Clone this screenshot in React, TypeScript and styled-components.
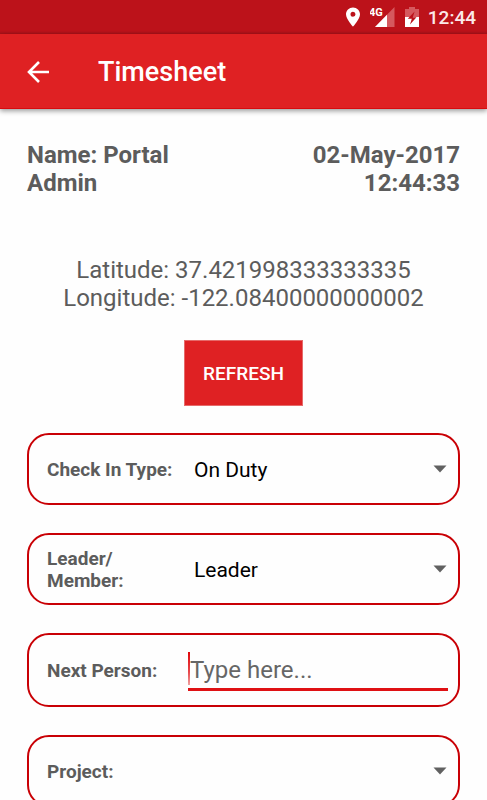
import React from "react";
import styled, { createGlobalStyle } from "styled-components";

const GlobalStyle = createGlobalStyle`
  * { box-sizing: border-box; }
  html { scrollbar-width: none; }
  body {
    margin: 0;
    background: #fefefe;
    color: #5c5c5c;
    font-family: Roboto, "Liberation Sans", sans-serif;
  }
`;

const StatusBar = styled.div`
  display: flex;
  align-items: center;
  justify-content: flex-end;
  height: 34px;
  padding: 0 11px;
  background: linear-gradient(#bc121a 31px, #a61118 34px);
  color: #fff;
`;

const StatusIcon = styled.svg<{ $gap: number }>`
  display: block;
  flex: none;
  margin-right: ${(p) => p.$gap}px;
`;

const Clock = styled.time`
  padding-top: 2px;
  font-size: 19px;
  line-height: 32px;
  font-weight: 500;
  color: #fbe9e9;
`;

const AppBar = styled.header`
  display: flex;
  align-items: center;
  gap: 48px;
  height: 75px;
  padding: 2px 26px 0;
  background: #df2123;
  border-bottom: 1px solid #d80b0e;
  box-shadow: 0 2px 5px rgba(0, 0, 0, 0.4);
  color: #fff;
`;

const BackButton = styled.button`
  display: flex;
  padding: 0;
  border: 0;
  background: none;
  color: inherit;
  cursor: pointer;
`;

const Title = styled.h1`
  margin: 0;
  font-size: 27px;
  line-height: 32px;
  font-weight: 500;
`;

const Content = styled.main`
  display: flex;
  flex-direction: column;
  padding: 32px 27px 28px;
`;

const Summary = styled.section`
  display: flex;
  justify-content: space-between;
  font-size: 24px;
  line-height: 28px;
  font-weight: 700;
`;

const SummaryText = styled.p<{ $end?: boolean }>`
  flex: 0 1 50%;
  max-width: 160px;
  margin: 0;
  text-align: ${(p) => (p.$end ? "right" : "left")};
`;

const Coordinates = styled.p`
  margin: 59px 0 28px;
  font-size: 24px;
  line-height: 28px;
  text-align: center;
`;

const RefreshButton = styled.button`
  align-self: center;
  padding: 23px 18px 21px;
  border: 1px solid #e66a6a;
  background: #df2123;
  color: #fff;
  font: 500 19px/20px Roboto, "Liberation Sans", sans-serif;
  text-transform: uppercase;
  cursor: pointer;
`;

const Form = styled.form`
  display: flex;
  flex-direction: column;
  gap: 28px;
  margin-top: 27px;
`;

const Field = styled.div`
  display: grid;
  grid-template-columns: 141px minmax(0, 1fr);
  align-items: center;
  min-height: 72px;
  padding: 0 10px 0 18px;
  border: 2px solid #c90005;
  border-radius: 22px;
`;

const TextField = styled(Field)`
  min-height: 74px;
`;

const Label = styled.label`
  padding-top: 2px;
  font-size: 19px;
  line-height: 22px;
  font-weight: 700;
`;

const SelectBox = styled.div`
  display: grid;
  align-items: center;

  > * { grid-area: 1 / 1; }
  > svg {
    justify-self: end;
    margin-right: 1px;
    pointer-events: none;
  }
`;

const Select = styled.select`
  width: 100%;
  height: 48px;
  padding: 2px 24px 0 6px;
  border: 0;
  outline: 0;
  appearance: none;
  background: none;
  color: #000;
  font: 400 21px/28px Roboto, "Liberation Sans", sans-serif;
`;

const Input = styled.input`
  width: 100%;
  height: 42px;
  padding: 2px 0 0 2px;
  border: 0;
  border-bottom: 3px solid #df1114;
  border-radius: 0;
  outline: 0;
  background: linear-gradient(#e0070b, #e8474a 60%, #f0a0a0) 0 3px / 2px 33px no-repeat;
  color: #000;
  font: 400 24px/28px Roboto, "Liberation Sans", sans-serif;

  &::placeholder { color: #666; opacity: 1; }
`;

const Arrow = () => (
  <svg width="14" height="8" viewBox="0 0 14 8" aria-hidden="true">
    <path d="M0.5 0.5h13L7 7.5z" fill="#616161" />
  </svg>
);

function SelectField({ id, label, options }: { id: string; label: React.ReactNode; options: string[] }) {
  return (
    <Field>
      <Label htmlFor={id}>{label}</Label>
      <SelectBox>
        <Select id={id}>
          {options.map((option) => (
            <option key={option}>{option}</option>
          ))}
        </Select>
        <Arrow />
      </SelectBox>
    </Field>
  );
}

export default function App() {
  return (
    <>
      <GlobalStyle />
      <StatusBar>
        <StatusIcon $gap={10} width="14" height="20" viewBox="0 0 14 20" aria-hidden="true">
          <path
            d="M7 0.5C3.1 0.5 0 3.5 0 7.3c0 5 7 12.4 7 12.4s7-7.4 7-12.4C14 3.5 10.9 0.5 7 0.5zm0 9.2a2.5 2.5 0 1 1 0-5 2.5 2.5 0 0 1 0 5z"
            fill="#fff"
          />
        </StatusIcon>
        <StatusIcon $gap={10} width="25" height="20" viewBox="0 0 25 20" aria-hidden="true">
          <path d="M24.5 0v20H5z" fill="#d5595e" />
          <path d="M17 7.7V20H5z" fill="#fff" />
          <text
            x="-1"
            y="9"
            fill="#fff"
            fontFamily="Liberation Sans Narrow, Roboto, sans-serif"
            fontSize="11"
            fontWeight="700"
          >
            4G
          </text>
        </StatusIcon>
        <StatusIcon $gap={9} width="14" height="20" viewBox="0 0 14 20" aria-hidden="true">
          <path d="M4 0h6v2h4v8H0V2h4z" fill="#d5595e" />
          <path d="M0 10h14v10H0z" fill="#fff" />
          <path d="M9.6 4.5L2.8 11.8h4L5 17.4l6.5-7.2H7.8z" fill="#bc121a" />
        </StatusIcon>
        <Clock>12:44</Clock>
      </StatusBar>
      <AppBar>
        <BackButton type="button" aria-label="Back">
          <svg width="24" height="24" viewBox="0 0 24 24" fill="none" stroke="currentColor" strokeWidth="2.6" aria-hidden="true">
            <path d="M23 12H3M13 2L3 12l10 10" />
          </svg>
        </BackButton>
        <Title>Timesheet</Title>
      </AppBar>
      <Content>
        <Summary>
          <SummaryText>Name: Portal Admin</SummaryText>
          <SummaryText $end>
            02-May-2017
            <br />
            12:44:33
          </SummaryText>
        </Summary>
        <Coordinates>
          Latitude: 37.421998333333335
          <br />
          Longitude: -122.08400000000002
        </Coordinates>
        <RefreshButton type="button">Refresh</RefreshButton>
        <Form>
          <SelectField id="check-in" label="Check In Type:" options={["On Duty", "Off Duty"]} />
          <SelectField
            id="role"
            label={
              <>
                Leader/
                <br />
                Member:
              </>
            }
            options={["Leader", "Member"]}
          />
          <TextField>
            <Label htmlFor="next-person">Next Person:</Label>
            <Input id="next-person" type="text" placeholder="Type here..." />
          </TextField>
          <SelectField id="project" label="Project:" options={[""]} />
        </Form>
      </Content>
    </>
  );
}
